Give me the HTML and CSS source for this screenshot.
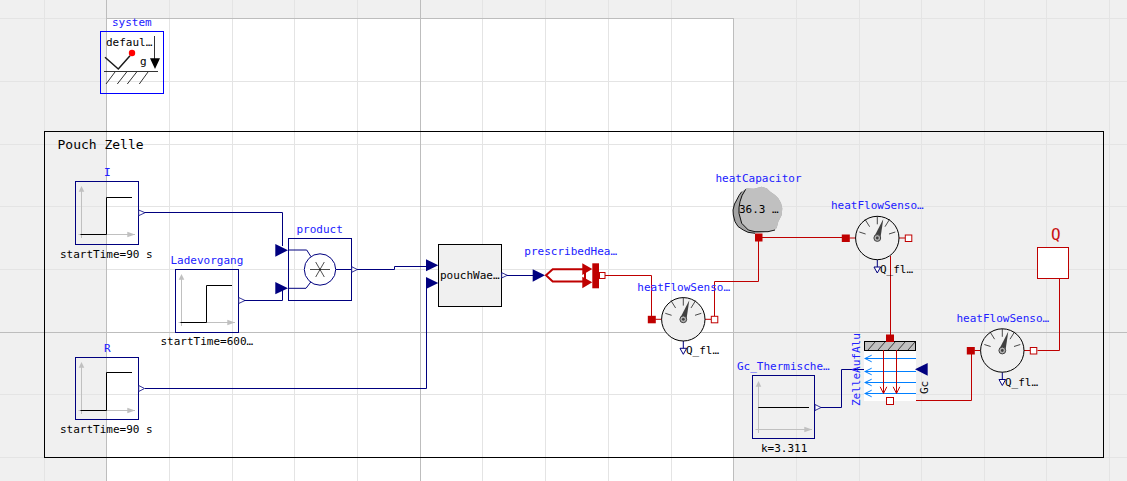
FILE: index.html
```html
<!DOCTYPE html>
<html lang="de">
<head>
<meta charset="utf-8">
<title>Pouch Zelle</title>
<link rel="stylesheet" href="styles.css">
</head>
<body>
<main class="canvas">
<svg class="diagram" xmlns="http://www.w3.org/2000/svg" width="1127" height="481" viewBox="0 0 1127 481">
  <defs>
    <g id="axes">
      <path class="axis" d="M6 9V56.5M3 53H59.5"/>
      <path class="axis-head" d="M6 4.5L3.2 10.2H8.8ZM59.5 53L51.8 50.3V55.7Z"/>
    </g>
    <g id="step">
      <use href="#axes"/>
      <path class="signal" d="M5 53H31V16H56.5"/>
    </g>
    <g id="gauge">
      <path class="heat" d="M-28 0H-21.5M21.5 0H28"/>
      <path class="wire" d="M0 21.5V29"/>
      <circle class="dial" r="21.7"/>
      <path class="tick" d="M-18 -6L-11.7 -4M-12.3 -18.7L-7.7 -11.3M0 -21.7V-13.7M12.3 -18.7L7.7 -11.3M18 -6L11.7 -4"/>
      <path class="needle" d="M-3 -1.5L3 1L6 -19Z"/>
      <circle class="hub" r="3.4"/>
      <circle class="hub-dot" r="1.4"/>
      <path class="out-tri" d="M-3.3 29H3.3L0 35Z"/>
      <rect class="port-solid" x="-35.5" y="-3.5" width="8" height="7.5"/>
      <rect class="port-open" x="28" y="-3" width="6.5" height="6.5"/>
    </g>
  </defs>

  <!-- sheet and grid -->
  <rect class="sheet" x="107" y="18" width="626" height="463"/>
  <path class="grid" d="M44.5 0V481M169.5 0V481M232.5 0V481M294.5 0V481M357.5 0V481M482.5 0V481M545.5 0V481M608.5 0V481M671.5 0V481M796.5 0V481M859.5 0V481M921.5 0V481M984.5 0V481M1046.5 0V481M1109.5 0V481M0 18.5H1127M0 81.5H1127M0 144.5H1127M0 206.5H1127M0 269.5H1127M0 394.5H1127M0 457.5H1127"/>
  <path class="grid-major" d="M106.5 0V481M420.5 0V481M733.5 18V481M107 18.5H733M0 332.5H1127"/>

  <!-- group frame -->
  <rect class="frame" x="44.5" y="131.5" width="1059" height="326"/>
  <text class="t title" x="57.5" y="149">Pouch Zelle</text>

  <!-- system -->
  <rect class="box-blue" x="100.5" y="31.5" width="63" height="62"/>
  <text class="t name" x="112" y="26">system</text>
  <text class="t" x="106" y="46">defaul…</text>
  <path class="sys-v" d="M105 57.3L118.3 69L130 55.7"/>
  <circle class="sys-dot" cx="132" cy="53" r="3.2"/>
  <path class="sys-line" d="M104 71.5H158M106 84L115 72M117.3 84L126.7 72M127.3 84L136.7 72M139.3 84L148 72M154.5 36V60"/>
  <path class="solid-black" d="M150 58.3H160L155 69Z"/>
  <text class="t" x="140" y="65">g</text>

  <!-- wires (signal) -->
  <path class="wire" d="M145 212.5H282.5V246M240 300.5H282.5V288M357 269.5H394.5V266.5H428M145 388.5H426.5V285M507 275.5H534M821 407.5H841.5V369.5H864"/>

  <!-- I -->
  <rect class="box-navy" x="75.5" y="181.5" width="63" height="63"/>
  <use href="#step" x="75.5" y="181.5"/>
  <text class="t name" x="104" y="176">I</text>
  <text class="t" x="60" y="258">startTime=90 s</text>
  <path class="open-tri" d="M138.7 210L145 212.7L138.7 215.7Z"/>

  <!-- Ladevorgang -->
  <rect class="box-navy" x="175.5" y="269.5" width="63" height="63"/>
  <use href="#step" x="175.5" y="269.5"/>
  <text class="t name" x="170.5" y="264">Ladevorgang</text>
  <text class="t" x="160.5" y="345">startTime=600…</text>
  <path class="open-tri" d="M238.7 297.5L245 300.5L238.7 303.5Z"/>

  <!-- R -->
  <rect class="box-navy" x="75.5" y="357.5" width="63" height="62"/>
  <use href="#axes" x="75.5" y="357.5"/>
  <path class="signal" d="M80.5 410.5H106.5V372.5H132"/>
  <text class="t name" x="104" y="352">R</text>
  <text class="t" x="60" y="433">startTime=90 s</text>
  <path class="open-tri" d="M138.7 385.5L144.5 388.5L138.7 391.5Z"/>

  <!-- product -->
  <rect class="box-navy" x="288.5" y="238.5" width="63" height="62"/>
  <text class="t name" x="296.5" y="233">product</text>
  <path class="wire" d="M288 250H306.7L311 256.7M288 288.3H306L311 281.7M335.7 269.5H351.5"/>
  <circle class="mul" cx="320" cy="269.5" r="15.7"/>
  <path class="tick" d="M310 269.5H330M315.7 277L324.3 262M324.3 277L315.7 262"/>
  <path class="solid-navy" d="M275.3 244L288 250.3L275.3 256.7ZM275.3 282L288 288.3L275.3 294.3Z"/>
  <path class="open-tri" d="M351.7 266.7L357.3 269.5L351.7 272.3Z"/>

  <!-- pouchWaerme -->
  <rect class="box-black" x="438.5" y="244.5" width="63" height="62"/>
  <text class="t" x="440" y="279">pouchWae…</text>
  <path class="solid-navy" d="M426 259.3L438.3 265.3L426 271.3ZM426 277L438.3 283L426 289Z"/>
  <path class="open-tri" d="M501.7 272.7L507.3 275.3L501.7 278Z"/>

  <!-- prescribedHeatFlow -->
  <text class="t name" x="524.3" y="255">prescribedHea…</text>
  <path class="solid-navy" d="M532.7 269.3L545 275.3L532.7 281.7Z"/>
  <path class="heat-hollow" d="M546 275.3L552.7 269.3H585V281.5H552.7Z"/>
  <path class="solid-heat" d="M582.3 263.3L592.3 269L582.3 275ZM582.3 276.7L592.3 282.3L582.3 288.3Z"/>
  <rect class="solid-heat" x="592.3" y="263.3" width="6.7" height="25"/>
  <path class="heat" d="M605 275.5H651.5V317M758.5 241V281.5H714.5V316M762 237.5H842M890.5 256V336M916 400.5H971.5V354M1037.5 350.5H1059.5V279"/>
  <rect class="port-open" x="599.5" y="272.5" width="5.5" height="6"/>

  <!-- heatCapacitor -->
  <path class="blob-shade" d="M741.7 191.7L746.7 188.3L754 188.8L761.7 186.7L767 188.5L770 191.5L775 195L778.3 198.3L781 203L782.3 208.3L781.7 215L778.3 221.7L776.7 228L768.3 231.7L760 232.7L755 233.3L748 232.3L743.3 230L738 226.5L735 221.7L733.3 215L733 210L734.5 204L736.7 200L739 195.5Z"/>
  <path class="blob-main" d="M746 188.5L754 188.8L761.7 186.7L767 188.5L770 191.5L775 195L778.3 198.3L781 203L782.3 208.3L781.7 215L778.3 221.7L776.7 228L775 230L768 231.7L755 231.7L748.3 230L741.7 223.3L739 213.3L740 201.7Z"/>
  <path class="blob-line" d="M745.7 189.3L742 195.5L740 201.7L739 207.5L739 213.3L741.7 223.3L748.3 230L755 231.7L768 231.7L775 230M741.7 191.7L739 195.5L736.7 200L734.5 204L733 210L733.3 215L735 221.7L738 226.5L743.3 230L748 232.3L755 233.3"/>
  <text class="t" x="739" y="212.5">36.3 …</text>
  <text class="t name" x="715.5" y="182">heatCapacitor</text>
  <rect class="port-solid" x="755" y="233.5" width="7.5" height="8"/>

  <!-- heat flow sensors -->
  <use href="#gauge" x="683.3" y="319.3"/>
  <text class="t name" x="637.3" y="291">heatFlowSenso…</text>
  <text class="t" x="686" y="354">Q_fl…</text>

  <use href="#gauge" x="877.3" y="238"/>
  <text class="t name" x="831" y="209">heatFlowSenso…</text>
  <text class="t" x="880" y="273">Q_fl…</text>

  <use href="#gauge" x="1002.3" y="350.5"/>
  <text class="t name" x="956.5" y="322">heatFlowSenso…</text>
  <text class="t" x="1005" y="385.5">Q_fl…</text>

  <!-- Q source -->
  <rect class="box-q" x="1037.5" y="247.5" width="31" height="31"/>
  <text class="t q" x="1051" y="240">Q</text>

  <!-- Gc_ThermischerLeitwert -->
  <rect class="box-navy" x="752.5" y="375.5" width="62" height="63"/>
  <use href="#axes" x="752.5" y="376.5"/>
  <path class="signal" d="M758.3 407.5H809"/>
  <text class="t name" x="737" y="370">Gc_Thermische…</text>
  <text class="t" x="761" y="452">k=3.311</text>
  <path class="open-tri" d="M815 404.5L821 407.5L815 410.5Z"/>

  <!-- thermal conductor -->
  <rect class="panel" x="864" y="350" width="52" height="51"/>
  <path class="flow" d="M864.5 358.5H916M864.5 371.5H916M864.5 382.5H916M864.5 393.5H916M871.7 355.2L865 358.5L871.7 361.8M871.7 368.2L865 371.5L871.7 374.8M871.7 379.2L865 382.5L871.7 385.8M871.7 390.2L865 393.5L871.7 396.8"/>
  <rect class="wall" x="864.5" y="341.5" width="51" height="9"/>
  <path class="tick" d="M868 350L875 342M878 350L885 342M888 350L895 342M898 350L905 342M908 350L915 342"/>
  <path class="heat" d="M883.5 350V393M896.5 350V393M880.2 386.8L883.5 393.5L886.8 386.8M893.2 386.8L896.5 393.5L899.8 386.8"/>
  <rect class="port-solid" x="886" y="334.5" width="8" height="7.5"/>
  <rect class="port-open" x="886.5" y="397.5" width="7" height="7"/>
  <text class="t name" transform="translate(860 406) rotate(-90)">ZelleAufAlu</text>
  <text class="t" transform="translate(928 394) rotate(-90)">Gc</text>
  <path class="solid-navy" d="M915 369.3L927.7 363V375.7Z"/>
</svg>
</main>
</body>
</html>
```

FILE: styles.css
```css
html, body {
  margin: 0;
  padding: 0;
  background: #f0f0f0;
}
.canvas {
  width: 1127px;
  height: 481px;
  overflow: hidden;
}
.diagram {
  display: block;
}
.sheet { fill: #ffffff; }
.grid { fill: none; stroke: #e4e4e4; stroke-width: 1; }
.grid-major { fill: none; stroke: #bdbdbd; stroke-width: 1; }
.frame { fill: none; stroke: #000000; stroke-width: 1; }

.t {
  font-family: "DejaVu Sans Mono", monospace;
  font-size: 11px;
  fill: #000000;
}
.title { font-size: 13px; }
.name { fill: #2020ff; }
.q { font-size: 16px; fill: #c81010; }

.box-blue { fill: none; stroke: #0000ff; stroke-width: 1; }
.box-navy { fill: none; stroke: #00007f; stroke-width: 1; }
.box-black { fill: #f0f0f0; stroke: #000000; stroke-width: 1; }
.box-q { fill: #ffffff; stroke: #bf0000; stroke-width: 1; }

.wire { fill: none; stroke: #00007f; stroke-width: 1; }
.heat { fill: none; stroke: #bf0000; stroke-width: 1; }
.heat-hollow { fill: #ffffff; stroke: #bf0000; stroke-width: 2; }
.solid-heat { fill: #bf0000; }
.solid-navy { fill: #00007f; }
.solid-black { fill: #000000; }
.open-tri { fill: #ffffff; stroke: #00007f; stroke-width: 0.8; }
.out-tri { fill: #ffffff; stroke: #00007f; stroke-width: 1; }

.axis { fill: none; stroke: #c0c0c0; stroke-width: 1; }
.axis-head { fill: #c0c0c0; }
.signal { fill: none; stroke: #000000; stroke-width: 1; }
.tick { fill: none; stroke: #000000; stroke-width: 0.7; }
.mul { fill: #ffffff; stroke: #00007f; stroke-width: 1; }

.sys-v { fill: none; stroke: #1a1a1a; stroke-width: 1.5; }
.sys-dot { fill: #ff0000; }
.sys-line { fill: none; stroke: #000000; stroke-width: 0.8; }

.dial { fill: #f0f0f0; stroke: #000000; stroke-width: 1; }
.needle { fill: #404040; }
.hub { fill: #b0b0b0; stroke: #404040; stroke-width: 1; }
.hub-dot { fill: #404040; }
.port-solid { fill: #bf0000; }
.port-open { fill: #ffffff; stroke: #bf0000; stroke-width: 1; }

.blob-shade { fill: #a4a4a4; }
.blob-main { fill: #c0c0c0; }
.blob-line { fill: none; stroke: #000000; stroke-width: 0.9; }

.panel { fill: #ffffff; }
.wall { fill: #c0c0c0; stroke: #000000; stroke-width: 1; }
.flow { fill: none; stroke: #007fff; stroke-width: 1; }
```
